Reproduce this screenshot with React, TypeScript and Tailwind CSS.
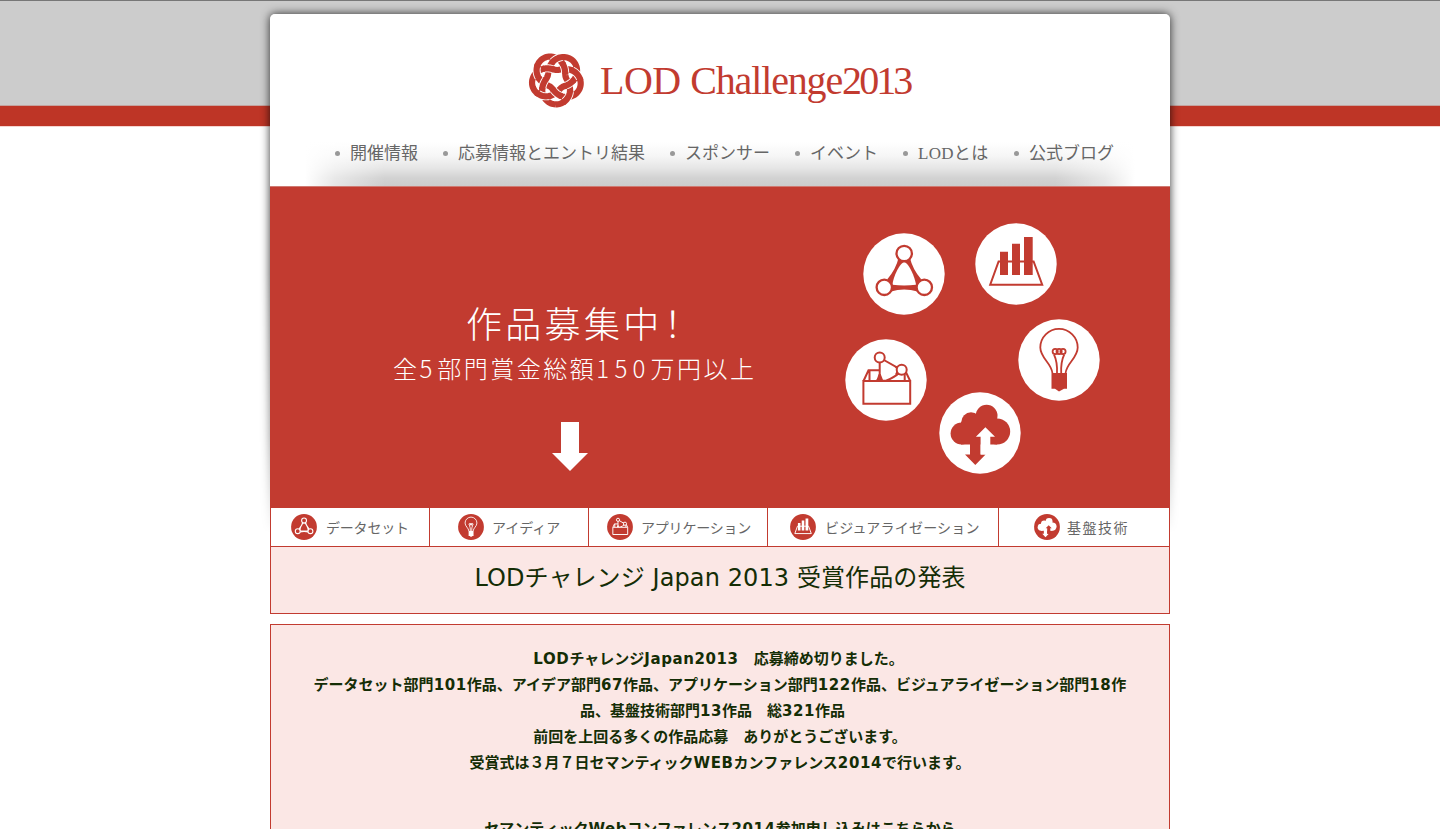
import type { ReactNode } from "react";

const RED = "#c23b30";

type Tone = { fg: string; bg: string; w: number };

function Disc({ fg, bg, w, size, children }: Tone & { size: number; children: (t: Tone) => ReactNode }) {
  return (
    <svg width={size} height={size} viewBox="0 0 82 82" className="block shrink-0">
      <circle cx="41" cy="41" r="40.7" fill={bg} />
      {children({ fg, bg, w })}
    </svg>
  );
}

const dataset = ({ fg, bg, w }: Tone) => (
  <g>
    <path d="M35.500 25Q33 36 24.500 46L28 58.500Q41 54.300 54.500 58.500L58 46Q49.500 36 47 25Z" fill={fg} />
    <path d="M41.200 29.200C37 29.500 30 44 29.500 51.800Q41 53 53 51.800C52 44 45.500 29.500 41.200 29.200Z" fill={bg} />
    <g fill={bg} stroke={fg} strokeWidth={2.3 * w}>
      <circle cx="41.200" cy="20.500" r="7.700" />
      <circle cx="21.300" cy="54.300" r="7.700" />
      <circle cx="61.300" cy="54.300" r="7.700" />
    </g>
  </g>
);

const chart = ({ fg, w }: Tone) => (
  <g>
    <path d="M23.600 38.500H58.600L67.200 61.700H15.200Z" fill="none" stroke={fg} strokeWidth={2 * w} />
    <path d="M25 28.700h8V52h-8zM37 20.700h8V52h-8zM49 14h8.700v38H49z" fill={fg} />
  </g>
);

const bulb = ({ fg, w }: Tone) => (
  <g fill="none" stroke={fg} strokeWidth={1.8 * w}>
    <path d="M34.400 54C33.500 44 22.300 39 22.300 28.500a18.700 18.700 0 0 1 37.400 0C59.700 39 48.500 44 47.600 54" />
    <path d="M39 54Q39.500 43 36 35.500M43.200 54Q42.700 43 46.200 35.500" />
    <circle cx="37.200" cy="32.500" r="2.600" />
    <circle cx="41.100" cy="32.500" r="2.600" />
    <circle cx="45" cy="32.500" r="2.600" />
    <path d="M33.500 54H49V69.700H46L41 72.500L37 69.700H33.500Z" fill={fg} stroke="none" />
  </g>
);

const box = ({ fg, bg, w }: Tone) => (
  <g fill="none" stroke={fg} strokeWidth={2 * w}>
    <path d="M18.500 42L23.500 31.300H60L65.200 42M24.500 31V42M59.700 34V42" />
    <path d="M34.700 22V36Q34.500 39 32 41.700H41Q50 38 54 34L52 28.500L38 20.500" fill={bg} />
    <path d="M18.400 42H65.200V64.700H18.400Z" fill={bg} />
    <path d="M33.700 35H35.700L38 41H31.500Z" fill={fg} stroke="none" />
    <path d="M49 27L55 27L55 36L50 35.500L52 31Z" fill={fg} stroke="none" />
    <circle cx="34.700" cy="18.400" r="5" fill={bg} />
    <circle cx="56.700" cy="30.700" r="5" fill={bg} />
  </g>
);

const cloud = ({ fg, bg }: Tone) => (
  <g fill={fg}>
    <circle cx="22.600" cy="41.500" r="11" />
    <circle cx="32" cy="30" r="9.700" />
    <circle cx="47.600" cy="23.700" r="10.900" />
    <circle cx="58.200" cy="39.500" r="13" />
    <path d="M22 30L40 22H52L58 30V52.500H22Z" />
    <path d="M31 50H41.600V62.500H46.600L36.300 73L26 62.500H31Z" />
    <path d="M46.400 35.200L56 44.800H51.300V62.500H41.600V44.800H36.900Z" fill={bg} />
  </g>
);

// Turk's head knot: three leads, five bights, alternating crossings.
function knotPath(from: number, to: number) {
  const steps = Math.max(8, Math.ceil((to - from) / 0.05));
  let d = "";
  for (let n = 0; n <= steps; n++) {
    const t = from + ((to - from) * n) / steps;
    const r = 17.2 + 7.7 * Math.cos((5 * t) / 3);
    const a = t + (92 * Math.PI) / 180;
    d += `${n ? "L" : "M"}${(28.5 + r * Math.cos(a)).toFixed(2)} ${(28.5 + r * Math.sin(a)).toFixed(2)}`;
  }
  return d;
}

const overs = Array.from({ length: 10 }, (_, n) => Math.PI * (0.4 + 0.6 * n));

function Knot() {
  return (
    <svg width="57" height="57" viewBox="0 0 57 57" fill="none" className="block shrink-0">
      <path d={knotPath(0, 6 * Math.PI)} stroke={RED} strokeWidth="6.200" />
      {overs.map((t) => (
        <g key={t}>
          <path d={knotPath(t - 0.24, t + 0.24)} stroke="#fff" strokeWidth="8" />
          <path d={knotPath(t - 0.32, t + 0.32)} stroke={RED} strokeWidth="6.200" />
        </g>
      ))}
    </svg>
  );
}

const nav = [
  { label: "開催情報", cls: "ml-[65px] w-[108px]" },
  { label: "応募情報とエントリ結果", cls: "w-[227px]" },
  { label: "スポンサー", cls: "w-[125px]" },
  { label: "イベント", cls: "w-[108px]" },
  { label: "LODとは", cls: "w-[111px] tracking-[0.300px]" },
  { label: "公式ブログ", cls: "w-[120px]" },
];

const tabs = [
  { label: "データセット", icon: dataset, cls: "w-[159px] pl-5 gap-[9px] tracking-[-0.200px]" },
  { label: "アイディア", icon: bulb, cls: "w-[159px] pl-7 gap-[8px]" },
  { label: "アプリケーション", icon: box, cls: "w-[179px] pl-[18px] gap-[8px] tracking-[-0.200px]" },
  { label: "ビジュアライゼーション", icon: chart, cls: "w-[231px] pl-[22px] gap-[9px] tracking-[0.200px]" },
  { label: "基盤技術", icon: cloud, cls: "w-[171px] pl-[35px] gap-[7px] tracking-[1.500px]" },
];

const discs = [
  { icon: dataset, cls: "left-[593px] top-[46px]" },
  { icon: chart, cls: "left-[705px] top-[36px]" },
  { icon: bulb, cls: "left-[748px] top-[132px]" },
  { icon: box, cls: "left-[575px] top-[152px]" },
  { icon: cloud, cls: "left-[669px] top-[205px]" },
];

const notice = [
  { text: "LODチャレンジJapan2013　応募締め切りました。", cls: "pr-[3px]" },
  { text: "データセット部門101作品、アイデア部門67作品、アプリケーション部門122作品、ビジュアライゼーション部門18作", cls: "" },
  { text: "品、基盤技術部門13作品　総321作品", cls: "pr-[15px]" },
  { text: "前回を上回る多くの作品応募　ありがとうございます。", cls: "" },
  { text: "受賞式は３月７日セマンティックWEBカンファレンス2014で行います。", cls: "" },
  { text: "セマンティックWebコンファレンス2014参加申し込みはこちらから", cls: "mt-[40px]" },
];

function Spaced({ text }: { text: string }) {
  return (
    <>
      {text.split(/([A-Za-z0-9]+)/).map((part, i) =>
        i % 2 ? (
          <span key={i} className="tracking-[0.600px]">{part}</span>
        ) : (
          part
        ),
      )}
    </>
  );
}

export default function App() {
  return (
    <div className="h-[829px] overflow-hidden bg-[linear-gradient(#777_0_1px,#ccc_1px_105px,#c5a29e_105px_106px,#be3526_106px_126px,#f5d5d1_126px_127px,#fff_127px)] font-['DejaVu_Sans','Noto_Sans_CJK_JP',sans-serif]">
      <div className="relative isolate mx-auto mt-[14px] w-[900px]">
        <div className="absolute -inset-x-3 -top-3 -z-10 h-[542px] px-3 pt-3 [mask-image:linear-gradient(#000_50%,#0008_80%,transparent_98%)]">
          <div className="h-full rounded-[5px] shadow-[0_0_10px_rgba(0,0,0,0.8)]" />
        </div>
        <header className="flex h-[172px] flex-col rounded-t-[5px] bg-white bg-[linear-gradient(90deg,#fff_35px,#ffffff80_65px,#fff0_115px,#fff0_785px,#ffffff80_835px,#fff_865px),linear-gradient(0deg,#ccc_0px,#d2d2d2_8px,#e6e6e6_18px,#f6f6f6_30px,#fff_44px)]">
          <div className="flex h-[116px] items-center pt-[18px] pl-[258px]">
            <div className="-mt-[3px]"><Knot /></div>
            <h1 className="ml-[15px] whitespace-nowrap font-['Liberation_Serif',serif] text-[40px] leading-none tracking-[-1.150px] text-[#c23b30]">
              <span className="tracking-[-0.500px]">LOD </span>Challenge<span className="tracking-[-2.900px]">2013</span>
            </h1>
          </div>
          <nav className="flex h-[46px] items-center text-[17px] text-[#666] font-['Liberation_Serif','Noto_Sans_CJK_JP',serif]">
            {nav.map((n) => (
              <a key={n.label} className={`flex shrink-0 items-center whitespace-nowrap ${n.cls}`}>
                <span className="mr-[10px] size-[5px] rounded-full bg-[#999]" />
                <span className="pt-[2px]">{n.label}</span>
              </a>
            ))}
          </nav>
        </header>
        <section className="relative h-[321px] border-t border-[#cf7a72] bg-[#c23b30] text-white font-['Noto_Sans_CJK_JP',sans-serif] font-light">
          <div className="flex w-[600px] flex-col items-start pt-[109px]">
            <p className="ml-[196px] whitespace-nowrap text-[36px] leading-[52px] tracking-[3.300px]">作品募集<span className="tracking-[-4.500px]">中！</span></p>
            <p className="mt-[1px] ml-[123px] whitespace-nowrap text-[24px] leading-[38px] tracking-[2.500px]">
              全<span className="tracking-[5px]">5</span>部門賞金総額<span className="tracking-[5.200px]">150</span>万円以上
            </p>
            <svg width="36" height="50" viewBox="0 0 36 50" className="mt-[35px] ml-[282px] block">
              <path d="M9 0H27V31H36L18 49L0 31H9Z" fill="#fff" />
            </svg>
          </div>
          {discs.map((d, i) => (
            <div key={i} className={`absolute ${d.cls}`}>
              <Disc fg={RED} bg="#fff" w={1} size={82}>{d.icon}</Disc>
            </div>
          ))}
        </section>
        <ul className="flex h-[40px] border border-r-0 border-[#c23b30] bg-white text-[14px] text-[#666] font-['Noto_Sans_CJK_JP',sans-serif]">
          {tabs.map((t) => (
            <li key={t.label} className={`flex shrink-0 items-center whitespace-nowrap border-r border-[#c23b30] ${t.cls}`}>
              <Disc fg="#fff" bg={RED} w={1.5} size={26}>{t.icon}</Disc>
              {t.label}
            </li>
          ))}
        </ul>
        <section className="h-[67px] border border-t-0 border-[#c23b30] bg-[#fbe7e5] pt-[13px] text-center text-[24px] leading-[36px] tracking-[0.100px] text-[#142d05]">
          LODチャレンジ Japan 2013 受賞作品の発表
        </section>
        <section className="mt-[10px] h-[260px] border border-[#c23b30] bg-[#fbe7e5] pt-[21px] text-center text-[15px] font-bold leading-[26px] text-[#142d05]">
          {notice.map((line) => (
            <p key={line.text} className={`whitespace-nowrap ${line.cls}`}><Spaced text={line.text} /></p>
          ))}
        </section>
      </div>
    </div>
  );
}
